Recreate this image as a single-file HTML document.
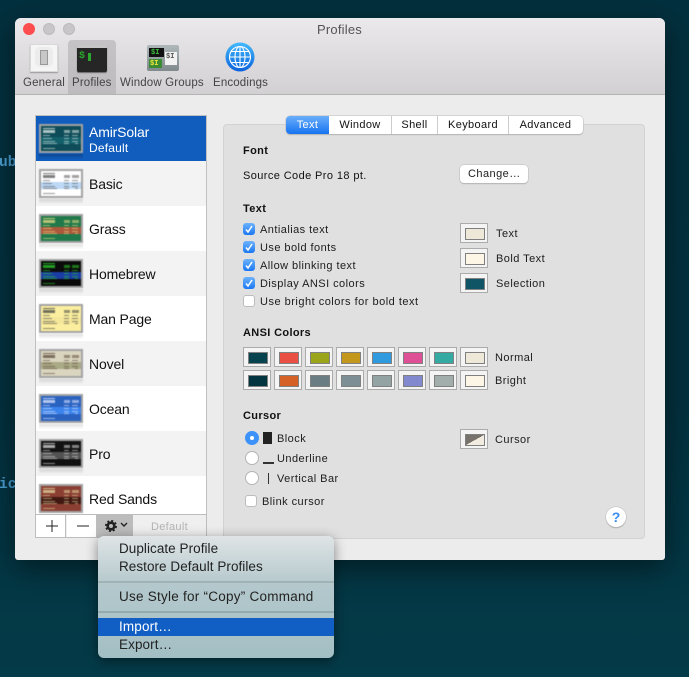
<!DOCTYPE html>
<html><head><meta charset="utf-8">
<style>
html,body{margin:0;padding:0}
body{width:689px;height:677px;overflow:hidden;position:relative;background:linear-gradient(#03303e,#03313f 60%,#043b48);font-family:"Liberation Sans",sans-serif}
div,svg,span.a{position:absolute;box-sizing:border-box}
.t{position:absolute;white-space:nowrap;font-size:11px;line-height:14px;color:#1c1c1c;letter-spacing:.45px;margin-top:1px}
.b{font-weight:bold;color:#111;letter-spacing:.35px}
.w{position:absolute;width:28px;height:20px;background:#f4f4f4;border:1px solid #ababab}
.w i{position:absolute;left:4px;top:4px;width:18px;height:10px;border:1px solid #808080;display:block}
.c{position:absolute;width:12px;height:12px;border-radius:3px;background:linear-gradient(#6db3fd,#1a78f4)}
.c svg{left:0;top:0}
.u{position:absolute;width:12px;height:12px;border-radius:3px;background:#fff;border:1px solid #bdbdbd}
.r{position:absolute;width:14px;height:14px;border-radius:50%;background:#fff;border:1px solid #b5b5b5}
.tb{position:absolute;top:116px;height:18px;line-height:19px;font-size:11px;text-align:center;color:#111;letter-spacing:.35px}
.row{position:absolute;left:1px;width:170px;height:45px}
.n{position:absolute;left:53px;top:15px;font-size:14px;line-height:16px;color:#111;white-space:nowrap;letter-spacing:-.15px}
.th{position:absolute;left:3px;top:8px;width:44px;height:29px;filter:blur(.45px)}
.th svg{left:0;top:0}
.rf{position:absolute;left:3px;top:38px;width:44px;height:5px;background:linear-gradient(rgba(0,0,0,.13),rgba(0,0,0,0));filter:blur(.5px)}
.m{position:absolute;left:21px;font-size:13.5px;line-height:18px;color:#222;white-space:nowrap;letter-spacing:.05px;margin-top:1px}
.l{position:absolute;top:76px;font-size:11.5px;line-height:14px;color:#444;white-space:nowrap;letter-spacing:.15px}
</style></head>
<body>
<svg width="0" height="0" style="position:absolute"><defs>
<symbol id="th" viewBox="0 0 44 29">
<rect width="44" height="29" fill="#a3a3a3"/>
<rect x="2" y="2" width="40" height="25" style="fill:var(--bg)"/>
<rect x="2" y="13" width="40" height="7" style="fill:var(--bd)" opacity=".95"/>
<rect x="4" y="4" width="12" height="1" style="fill:var(--tx)" opacity=".8"/>
<rect x="4" y="6" width="12" height="3" style="fill:var(--tx)" opacity=".75"/>
<rect x="25" y="6" width="6" height="3" style="fill:var(--tx)" opacity=".55"/>
<rect x="33" y="6" width="7" height="3" style="fill:var(--tx)" opacity=".55"/>
<g style="fill:var(--tx)" opacity=".6">
<rect x="4" y="11" width="7" height="1"/><rect x="25" y="11" width="5" height="1"/><rect x="33" y="11" width="6" height="1"/>
<rect x="4" y="14" width="9" height="1"/><rect x="25" y="14" width="5" height="1"/><rect x="33" y="14" width="6" height="1"/>
<rect x="4" y="17" width="12" height="1"/><rect x="25" y="17" width="5" height="1"/><rect x="33" y="17" width="6" height="1"/>
<rect x="4" y="19" width="14" height="1"/><rect x="25" y="19" width="5" height="1"/><rect x="36" y="19" width="3" height="1"/>
<rect x="4" y="24" width="12" height="1"/>
</g>
</symbol>
</defs></svg>

<div class="t" style="left:-1px;top:153px;font:bold 14.5px/18px 'Liberation Mono',monospace;color:#4aa0d4;letter-spacing:0">ub</div>
<div class="t" style="left:-1px;top:475px;font:bold 14.5px/18px 'Liberation Mono',monospace;color:#4aa0d4;letter-spacing:0">ic</div>

<!-- window -->
<div style="left:15px;top:18px;width:650px;height:542px;border-radius:6px 6px 3px 3px;background:#ececec;box-shadow:0 8px 30px rgba(0,0,0,.5);overflow:hidden">
  <div style="left:0;top:0;width:650px;height:77px;background:linear-gradient(#ebe9eb,#d2d0d2);border-bottom:1px solid #b4b4b4"></div>
</div>
<div style="left:23px;top:23px;width:12px;height:12px;border-radius:50%;background:#fc4c4e"></div>
<div style="left:43px;top:23px;width:12px;height:12px;border-radius:50%;background:#c8c6c8;border:1px solid #bbb"></div>
<div style="left:63px;top:23px;width:12px;height:12px;border-radius:50%;background:#c8c6c8;border:1px solid #bbb"></div>
<div class="t" style="left:317px;top:21px;font-size:13px;line-height:16px;color:#555;letter-spacing:.2px">Profiles</div>

<!-- toolbar -->
<div style="left:68px;top:40px;width:48px;height:54px;background:linear-gradient(#c5c3c5,#bdbbbd);border-radius:4px 4px 0 0"></div>
<div style="left:30px;top:44px;width:28px;height:28px;background:#f5f5f5;border:1px solid #d8d8d8;box-shadow:0 1px 1px #999"></div>
<div style="left:35px;top:47px;width:18px;height:20px;border-radius:5px;background:#ececec"></div>
<div style="left:40px;top:50px;width:8px;height:15px;background:#c8c8c8;border:1px solid #999"></div>
<div style="left:77px;top:45px;width:30px;height:27px;background:#262626;border-top:3px solid #c6c6c6;border-radius:2px;box-shadow:0 1px 1px #666"></div>
<div class="t" style="left:79px;top:49px;font:bold 10px/14px 'Liberation Mono',monospace;color:#2ea52e;letter-spacing:0">$</div>
<div style="left:88px;top:53px;width:3px;height:8px;background:#2ea52e"></div>
<div style="left:147px;top:45px;width:32px;height:26px;background:linear-gradient(#aeb8bb,#808a8c);border-radius:2px"></div>
<div style="left:149px;top:48px;width:15px;height:9px;background:#111"></div>
<div class="t" style="left:151px;top:46px;font:bold 7px/12px 'Liberation Mono',monospace;color:#3ec03e;letter-spacing:0">$I</div>
<div style="left:149px;top:59px;width:13px;height:9px;background:#3b8a34"></div>
<div class="t" style="left:150px;top:57px;font:bold 7px/12px 'Liberation Mono',monospace;color:#f1e83c;letter-spacing:0">$I</div>
<div style="left:165px;top:52px;width:12px;height:13px;background:#f2f2f2"></div>
<div class="t" style="left:166px;top:49px;font:bold 7px/14px 'Liberation Mono',monospace;color:#555;letter-spacing:0">$I</div>
<svg style="left:225px;top:42px" width="30" height="30" viewBox="0 0 30 30">
<defs><linearGradient id="g" x1="0" y1="0" x2="0" y2="1"><stop offset="0" stop-color="#43b9fb"/><stop offset="1" stop-color="#0b63dc"/></linearGradient></defs>
<circle cx="15" cy="15" r="14.5" fill="url(#g)"/>
<g fill="none" stroke="#fff" stroke-width="1.1"><circle cx="15" cy="15" r="10.5"/><ellipse cx="15" cy="15" rx="5" ry="10.5"/><path d="M15 4.5V25.500M4.500 15H25.500M6 9.500H24M6 20.500H24"/></g>
</svg>
<div class="l" style="left:23px">General</div>
<div class="l" style="left:72px">Profiles</div>
<div class="l" style="left:120px">Window Groups</div>
<div class="l" style="left:213px">Encodings</div>

<!-- list -->
<div style="left:35px;top:115px;width:172px;height:423px;background:#fff;border:1px solid #c0c0c0;overflow:hidden">
  <div class="row" style="left:0;top:0;background:#115dbd"><div class="th" style="left:3px"><svg width="44" height="29" style="--bg:#0d4c58;--bd:#14616d;--tx:#e4ecea"><use href="#th"/></svg></div><div class="rf" style="background:linear-gradient(rgba(0,0,0,.25),rgba(0,0,0,0))"></div><div class="n" style="color:#fff;top:8px">AmirSolar</div><div class="n" style="color:#fff;top:24px;font-size:12px;letter-spacing:.2px">Default</div></div>
  <div class="row" style="left:0;top:45px;background:#f3f3f3"><div class="th"><svg width="44" height="29" style="--bg:#fff;--bd:#b9d7f6;--tx:#555"><use href="#th"/></svg></div><div class="rf"></div><div class="n">Basic</div></div>
  <div class="row" style="left:0;top:90px;background:#fff"><div class="th"><svg width="44" height="29" style="--bg:#20794a;--bd:#b5563a;--tx:#e9dd85"><use href="#th"/></svg></div><div class="rf"></div><div class="n">Grass</div></div>
  <div class="row" style="left:0;top:135px;background:#f3f3f3"><div class="th"><svg width="44" height="29" style="--bg:#0b0b0b;--bd:#1a3fae;--tx:#2ccf2c"><use href="#th"/></svg></div><div class="rf"></div><div class="n">Homebrew</div></div>
  <div class="row" style="left:0;top:180px;background:#fff"><div class="th"><svg width="44" height="29" style="--bg:#fbef9f;--bd:#f3e69a;--tx:#444"><use href="#th"/></svg></div><div class="rf"></div><div class="n">Man Page</div></div>
  <div class="row" style="left:0;top:225px;background:#f3f3f3"><div class="th"><svg width="44" height="29" style="--bg:#dad5bf;--bd:#a9a884;--tx:#5c4a3c"><use href="#th"/></svg></div><div class="rf"></div><div class="n">Novel</div></div>
  <div class="row" style="left:0;top:270px;background:#fff"><div class="th"><svg width="44" height="29" style="--bg:#2a62c0;--bd:#3d86ef;--tx:#e2eaff"><use href="#th"/></svg></div><div class="rf"></div><div class="n">Ocean</div></div>
  <div class="row" style="left:0;top:315px;background:#f3f3f3"><div class="th"><svg width="44" height="29" style="--bg:#121212;--bd:#565656;--tx:#ddd"><use href="#th"/></svg></div><div class="rf"></div><div class="n">Pro</div></div>
  <div class="row" style="left:0;top:360px;background:#fff"><div class="th"><svg width="44" height="29" style="--bg:#8b3e32;--bd:#3d1510;--tx:#e5d9a0"><use href="#th"/></svg></div><div class="n">Red Sands</div></div>
</div>
<!-- footer -->
<div style="left:35px;top:514px;width:172px;height:24px;background:#efefef;border:1px solid #bdbdbd"></div>
<div style="left:36px;top:515px;width:30px;height:22px;background:#fff;border-right:1px solid #bdbdbd"></div>
<div style="left:67px;top:515px;width:30px;height:22px;background:#fff;border-right:1px solid #bdbdbd"></div>
<div style="left:97px;top:515px;width:36px;height:22px;background:#bcbcbc"></div>
<svg style="left:46px;top:520px" width="12" height="12"><path d="M6 0V12M0 6H12" stroke="#222" stroke-width="1"/></svg>
<svg style="left:77px;top:520px" width="12" height="12"><path d="M0 6H12" stroke="#222" stroke-width="1"/></svg>
<svg style="left:105px;top:520px" width="12" height="12" viewBox="0 0 12 12"><circle cx="6" cy="6" r="3.300" fill="none" stroke="#222" stroke-width="2.600"/><circle cx="6" cy="6" r="5" fill="none" stroke="#222" stroke-width="2" stroke-dasharray="2 1.930"/></svg>
<svg style="left:120px;top:522px" width="8" height="6"><path d="M1 1L4 4L7 1" fill="none" stroke="#222" stroke-width="1.400"/></svg>
<div class="t" style="left:151px;top:519px;color:#b4b4b4;font-size:11px;letter-spacing:.3px">Default</div>

<!-- panel -->
<div style="left:223px;top:124px;width:422px;height:415px;background:#e0e0e0;border:1px solid #d2d2d2;border-radius:4px"></div>
<div style="left:286px;top:116px;width:297px;height:18px;background:#fff;border-radius:4px;box-shadow:0 0 0 .5px #bbb,0 1px 1px #aaa"></div>
<div class="tb" style="left:286px;width:43px;background:linear-gradient(#6aaefb,#1673f0);border-radius:4px 0 0 4px;color:#fff">Text</div>
<div class="tb" style="left:329px;width:63px;border-right:1px solid #ccc">Window</div>
<div class="tb" style="left:392px;width:46px;border-right:1px solid #ccc">Shell</div>
<div class="tb" style="left:438px;width:71px;border-right:1px solid #ccc">Keyboard</div>
<div class="tb" style="left:509px;width:73px">Advanced</div>

<div class="t b" style="left:243px;top:143px">Font</div>
<div class="t" style="left:243px;top:168px;color:#111;letter-spacing:.4px">Source Code Pro 18 pt.</div>
<div style="left:460px;top:165px;width:68px;height:18px;background:#fff;border-radius:4px;box-shadow:0 0 0 .5px #bbb,0 1px 1px #aaa"></div>
<div class="t" style="left:468px;top:166px">Change…</div>

<div class="t b" style="left:243px;top:201px">Text</div>
<div class="c" style="left:243px;top:223px"><svg width="12" height="12"><path d="M3 6.500L5 9L9 3" fill="none" stroke="#fff" stroke-width="1.500"/></svg></div>
<div class="c" style="left:243px;top:241px"><svg width="12" height="12"><path d="M3 6.500L5 9L9 3" fill="none" stroke="#fff" stroke-width="1.500"/></svg></div>
<div class="c" style="left:243px;top:259px"><svg width="12" height="12"><path d="M3 6.500L5 9L9 3" fill="none" stroke="#fff" stroke-width="1.500"/></svg></div>
<div class="c" style="left:243px;top:277px"><svg width="12" height="12"><path d="M3 6.500L5 9L9 3" fill="none" stroke="#fff" stroke-width="1.500"/></svg></div>
<div class="u" style="left:243px;top:295px"></div>
<div class="t" style="left:260px;top:222px">Antialias text</div>
<div class="t" style="left:260px;top:240px">Use bold fonts</div>
<div class="t" style="left:260px;top:258px">Allow blinking text</div>
<div class="t" style="left:260px;top:276px">Display ANSI colors</div>
<div class="t" style="left:260px;top:294px;letter-spacing:.5px">Use bright colors for bold text</div>

<div class="w" style="left:460px;top:223px"><i style="background:#eee8d9"></i></div>
<div class="w" style="left:460px;top:248px"><i style="background:#fdf6e6"></i></div>
<div class="w" style="left:460px;top:273px"><i style="background:#105565"></i></div>
<div class="t" style="left:496px;top:226px">Text</div>
<div class="t" style="left:496px;top:251px">Bold Text</div>
<div class="t" style="left:496px;top:276px">Selection</div>

<div class="t b" style="left:243px;top:325px">ANSI Colors</div>
<div class="w" style="left:243px;top:347px"><i style="background:#07434f"></i></div>
<div class="w" style="left:274px;top:347px"><i style="background:#e94f43"></i></div>
<div class="w" style="left:305px;top:347px"><i style="background:#9aa51a"></i></div>
<div class="w" style="left:336px;top:347px"><i style="background:#c2971c"></i></div>
<div class="w" style="left:367px;top:347px"><i style="background:#2f9ade"></i></div>
<div class="w" style="left:398px;top:347px"><i style="background:#df4f96"></i></div>
<div class="w" style="left:429px;top:347px"><i style="background:#35aaa2"></i></div>
<div class="w" style="left:460px;top:347px"><i style="background:#eee8d9"></i></div>
<div class="w" style="left:243px;top:370px"><i style="background:#033540"></i></div>
<div class="w" style="left:274px;top:370px"><i style="background:#d66127"></i></div>
<div class="w" style="left:305px;top:370px"><i style="background:#6a7d82"></i></div>
<div class="w" style="left:336px;top:370px"><i style="background:#7d8f94"></i></div>
<div class="w" style="left:367px;top:370px"><i style="background:#93a3a3"></i></div>
<div class="w" style="left:398px;top:370px"><i style="background:#8389cf"></i></div>
<div class="w" style="left:429px;top:370px"><i style="background:#a2aeac"></i></div>
<div class="w" style="left:460px;top:370px"><i style="background:#fdf6e6"></i></div>
<div class="t" style="left:495px;top:350px">Normal</div>
<div class="t" style="left:495px;top:373px">Bright</div>

<div class="t b" style="left:243px;top:408px">Cursor</div>
<div class="r" style="left:245px;top:431px;background:#3d92fa;border-color:#3d92fa"></div>
<div style="left:250px;top:436px;width:4px;height:4px;border-radius:50%;background:#fff"></div>
<div class="r" style="left:245px;top:451px"></div>
<div class="r" style="left:245px;top:471px"></div>
<div style="left:263px;top:432px;width:9px;height:12px;background:#222"></div>
<div style="left:263px;top:462px;width:11px;height:2px;background:#333"></div>
<div style="left:268px;top:473px;width:1px;height:11px;background:#333"></div>
<div class="t" style="left:277px;top:431px">Block</div>
<div class="t" style="left:277px;top:451px">Underline</div>
<div class="t" style="left:277px;top:471px">Vertical Bar</div>
<div class="u" style="left:245px;top:495px"></div>
<div class="t" style="left:262px;top:494px">Blink cursor</div>
<div class="w" style="left:460px;top:429px"><i style="background:linear-gradient(to bottom right,#77726c 50%,#f2ece0 50%)"></i></div>
<div class="t" style="left:495px;top:432px">Cursor</div>
<div style="left:606px;top:507px;width:20px;height:20px;border-radius:50%;background:#fff;box-shadow:0 0 0 .5px #bbb,0 1px 1px #999;text-align:center;font-weight:bold;font-size:14px;line-height:20px;color:#3a8cf0">?</div>

<!-- menu -->
<div style="left:98px;top:536px;width:236px;height:122px;border-radius:6px;background:linear-gradient(#dfe4e6,#b4c8cc 40%,#a3bfc4);box-shadow:0 3px 12px rgba(0,0,0,.45);overflow:hidden">
  <div class="m" style="top:3px">Duplicate Profile</div>
  <div class="m" style="top:21px">Restore Default Profiles</div>
  <div style="left:0;top:45px;width:236px;height:2px;background:#9fb3b6"></div>
  <div class="m" style="top:51px;letter-spacing:.25px">Use Style for “Copy” Command</div>
  <div style="left:0;top:75px;width:236px;height:2px;background:#93abae"></div>
  <div style="left:0;top:82px;width:236px;height:18px;background:#115fc4"></div>
  <div class="m" style="top:81px;color:#fff;letter-spacing:.15px">Import…</div>
  <div class="m" style="top:99px;letter-spacing:.1px">Export…</div>
</div>
</body></html>
